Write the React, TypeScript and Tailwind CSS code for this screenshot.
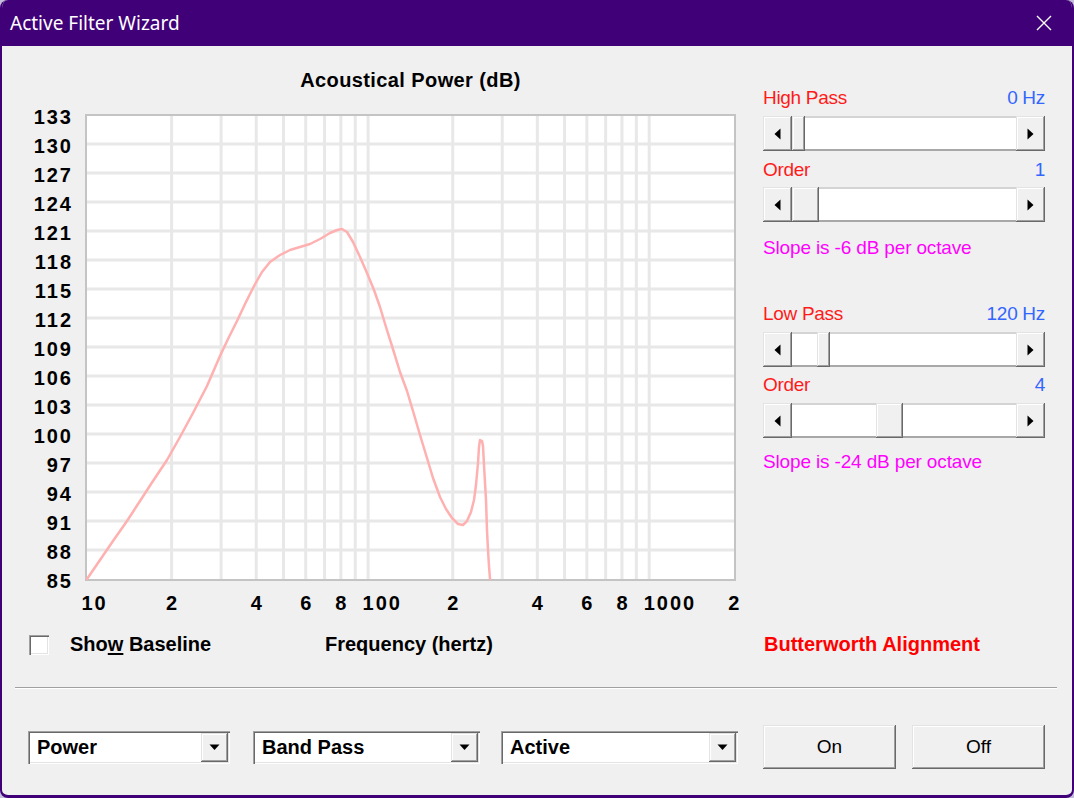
import React from "react";

const raised =
  "bg-[#f0f0f0] shadow-[inset_-1px_-1px_0_#696969,inset_1px_1px_0_#e3e3e3,inset_-2px_-2px_0_#a0a0a0,inset_2px_2px_0_#ffffff]";
const sunken =
  "shadow-[inset_1px_1px_0_#a0a0a0,inset_2px_2px_0_#696969,inset_-1px_-1px_0_#ffffff,inset_-2px_-2px_0_#e3e3e3]";

function LeftArrow() {
  return (
    <svg width="7" height="12" viewBox="0 0 7 12">
      <path d="M6.5 0.5 L0.5 6 L6.5 11.5 Z" fill="#000" />
    </svg>
  );
}
function RightArrow() {
  return (
    <svg width="7" height="12" viewBox="0 0 7 12">
      <path d="M0.5 0.5 L6.5 6 L0.5 11.5 Z" fill="#000" />
    </svg>
  );
}
function DownArrow() {
  return (
    <svg width="11" height="7" viewBox="0 0 11 7">
      <path d="M0.5 0.5 L10.5 0.5 L5.5 6 Z" fill="#000" />
    </svg>
  );
}

function ScrollBar({ pre, thumb }: { pre: string; thumb: string }) {
  return (
    <div className="flex h-[35px]">
      <div className={`${raised} w-[29px] flex items-center justify-center`}>
        <LeftArrow />
      </div>
      <div className="flex-1 flex bg-white shadow-[inset_0_2px_0_#d4d4d4,inset_0_-2px_0_#a8a8a8]">
        <div className={pre} />
        <div className={`${raised} ${thumb}`} />
      </div>
      <div className={`${raised} w-[29px] flex items-center justify-center`}>
        <RightArrow />
      </div>
    </div>
  );
}

function Combo({ w, label }: { w: string; label: string }) {
  return (
    <div className={`${w} h-[33px] bg-white p-[2px] ${sunken} flex`}>
      <div className="flex-1 pl-[7px] text-[20px] font-bold leading-[29px] text-black">{label}</div>
      <div className={`${raised} w-[27px] flex items-center justify-center`}>
        <DownArrow />
      </div>
    </div>
  );
}

function Label({ left, right }: { left: string; right: string }) {
  return (
    <div className="flex justify-between h-[22px] text-[19px] leading-[22px] tracking-[-0.3px]">
      <span className="text-[#ff1a1a]">{left}</span>
      <span className="text-[#3366ff]">{right}</span>
    </div>
  );
}

const xp = (f: number) => 87 + 281.1 * Math.log10(f / 10);
const yp = (db: number) => 115 + ((133 - db) * 464) / 48;

const vLines: number[] = [20, 30, 40, 50, 60, 70, 80, 90, 100, 200, 300, 400, 500, 600, 700, 800, 900, 1000];
const hLines: number[] = [130, 127, 124, 121, 118, 115, 112, 109, 106, 103, 100, 97, 94, 91, 88];
const yLabels: number[] = [133, 130, 127, 124, 121, 118, 115, 112, 109, 106, 103, 100, 97, 94, 91, 88, 85];
const xLabels: [string, number][] = [
  ["10", 10],
  ["2", 20],
  ["4", 40],
  ["6", 60],
  ["8", 80],
  ["100", 100],
  ["2", 200],
  ["4", 400],
  ["6", 600],
  ["8", 800],
  ["1000", 1000],
  ["2", 2000],
];

const curve =
  "87,579 100,560 113,541 127,521 140,501 153,481 167,460 180,437 193,413 207,386 220,356 228,339 237,321 246,302 254,286 262,272 270,262 280,255 290,250 300,247 310,244 320,239 330,233 337,230 342,229 347,232 353,242 360,257 367,273 374,290 380,307 386,327 392,346 400,372 407,391 413,411 420,435 427,458 433,478 440,497 446,509 452,518 458,524 463,525 467,521 471,512 474,500 476,485 478,463 479,447 480,440 482,441 483,446 484,465 486,500 487,530 488,550 489,566 490,579";

function Chart() {
  return (
    <svg width="726" height="526" viewBox="20 92 726 526" className="block">
      <rect x="85" y="114" width="651" height="467" fill="#c4c4c4" />
      <rect x="87" y="116" width="647" height="463" fill="#ffffff" />
      {vLines.map((f) => (
        <line key={"v" + f} x1={xp(f)} x2={xp(f)} y1="116" y2="579" stroke="#e8e8e8" strokeWidth="3" />
      ))}
      {hLines.map((d) => (
        <line key={"h" + d} x1="87" x2="734" y1={yp(d)} y2={yp(d)} stroke="#e8e8e8" strokeWidth="3" />
      ))}
      <polyline points={curve} fill="none" stroke="#ffb0b0" strokeWidth="2.5" strokeLinejoin="round" strokeLinecap="round" />
      <g fontFamily="'Liberation Sans', Arial, sans-serif" fontWeight="bold" fontSize="20" fill="#000">
        {yLabels.map((d) => (
          <text key={"yl" + d} x="73" y={yp(d) + 8.5} textAnchor="end" letterSpacing="2">
            {d}
          </text>
        ))}
        {xLabels.map(([t, f], i) => (
          <text key={"xl" + i} x={xp(f) - 5.5} y="610" letterSpacing="2">
            {t}
          </text>
        ))}
      </g>
    </svg>
  );
}

export default function App() {
  return (
    <div className="w-[1074px] h-[798px] bg-[#c4bddc] font-['Liberation_Sans',Arial,sans-serif] text-black">
      <div className="w-full h-full flex flex-col rounded-[8px] overflow-hidden border-2 border-t-0 border-b-[3px] border-[#400078] bg-[#f0f0f0]">
        <div className="h-[46px] shrink-0 bg-[#400078] flex items-center justify-between pl-[8px] pr-[20px] text-white">
          <span className="text-[19px] font-['Noto_Sans',sans-serif]">Active Filter Wizard</span>
          <svg width="16" height="16" viewBox="0 0 16 16">
            <path d="M1 1 L15 15 M15 1 L1 15" stroke="#ffffff" strokeWidth="1.4" />
          </svg>
        </div>

        <div className="flex-1 flex flex-col">
          <div className="flex">
            <div className="ml-[18px] w-[726px] flex flex-col pt-[23px]">
              <div className="ml-[65px] w-[651px] text-center text-[20px] leading-[23px] font-bold tracking-[0.4px]">
                Acoustical Power (dB)
              </div>
              <div>
                <Chart />
              </div>
            </div>

            <div className="ml-[17px] w-[282px] flex flex-col pt-[41px]">
              <Label left="High Pass" right="0 Hz" />
              <div className="mt-[7px]">
                <ScrollBar pre="w-[0px]" thumb="w-[13px]" />
              </div>
              <div className="mt-[8px]">
                <Label left="Order" right="1" />
              </div>
              <div className="mt-[6px]">
                <ScrollBar pre="w-[0px]" thumb="w-[27px]" />
              </div>
              <div className="mt-[15px] h-[22px] text-[19px] leading-[22px] tracking-[-0.15px] text-[#ff00ff]">
                Slope is -6 dB per octave
              </div>

              <div className="mt-[44px]">
                <Label left="Low Pass" right="120 Hz" />
              </div>
              <div className="mt-[7px]">
                <ScrollBar pre="w-[25px]" thumb="w-[13px]" />
              </div>
              <div className="mt-[7px]">
                <Label left="Order" right="4" />
              </div>
              <div className="mt-[7px]">
                <ScrollBar pre="w-[84px]" thumb="w-[27px]" />
              </div>
              <div className="mt-[13px] h-[22px] text-[19px] leading-[22px] tracking-[-0.15px] text-[#ff00ff]">
                Slope is -24 dB per octave
              </div>
            </div>
          </div>

          <div className="mt-[15px] flex items-center h-[23px] pl-[27px] text-[20px] leading-[23px] font-bold">
            <div className={`w-[20px] h-[20px] bg-white ${sunken}`} />
            <div className="ml-[21px] w-[255px]">
              Sho<span className="underline underline-offset-2">w</span> Baseline
            </div>
            <div className="w-[439px]">Frequency (hertz)</div>
            <div className="text-[#ff0000]">Butterworth Alignment</div>
          </div>

          <div className="mt-[31px] ml-[13px] mr-[15px] h-[2px] border-t border-[#a0a0a0] border-b border-b-white" />

          <div className="mt-[36px] flex items-center h-[44px]">
            <div className="ml-[26px]">
              <Combo w="w-[202px]" label="Power" />
            </div>
            <div className="ml-[23px]">
              <Combo w="w-[227px]" label="Band Pass" />
            </div>
            <div className="ml-[21px]">
              <Combo w="w-[237px]" label="Active" />
            </div>
            <button className={`ml-[25px] w-[133px] h-[44px] ${raised} text-[19px] text-black`}>On</button>
            <button className={`ml-[16px] w-[133px] h-[44px] ${raised} text-[19px] text-black`}>Off</button>
          </div>
        </div>
      </div>
    </div>
  );
}
